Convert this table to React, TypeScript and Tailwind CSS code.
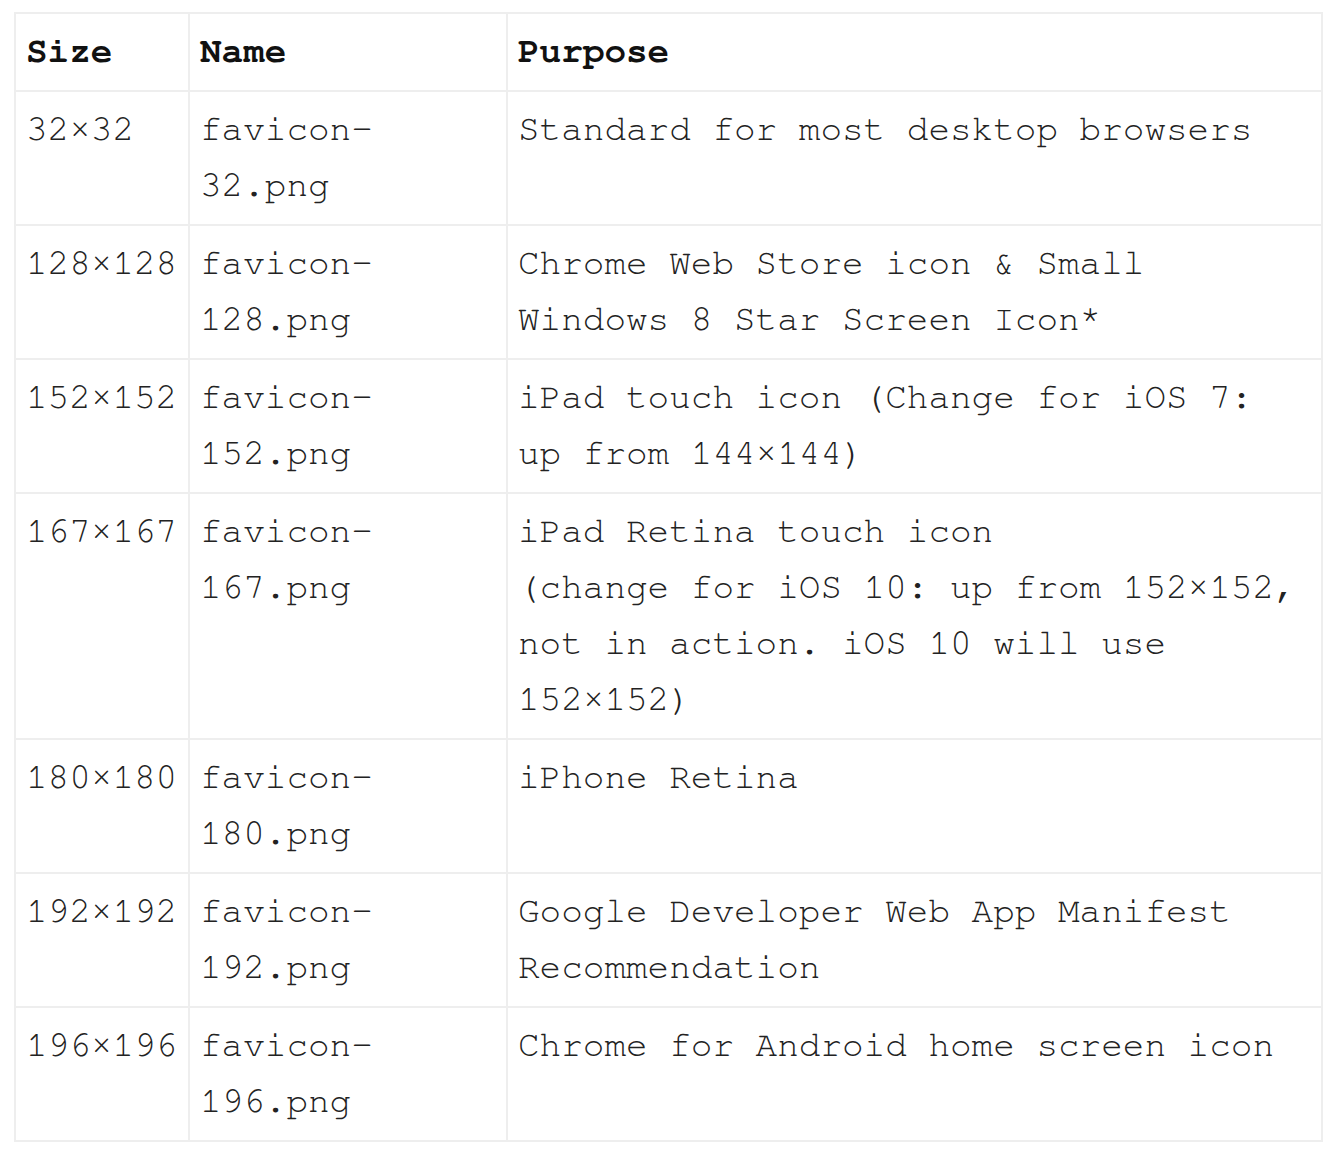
const rows: { size: string; name: string[]; purpose: string[] }[] = [
  { size: "32×32", name: ["favicon-", "32.png"], purpose: ["Standard for most desktop browsers"] },
  { size: "128×128", name: ["favicon-", "128.png"], purpose: ["Chrome Web Store icon & Small Windows 8 Star Screen Icon*"] },
  { size: "152×152", name: ["favicon-", "152.png"], purpose: ["iPad touch icon (Change for iOS 7: up from 144×144)"] },
  {
    size: "167×167",
    name: ["favicon-", "167.png"],
    purpose: ["iPad Retina touch icon", "(change for iOS 10: up from 152×152, not in action. iOS 10 will use 152×152)"],
  },
  { size: "180×180", name: ["favicon-", "180.png"], purpose: ["iPhone Retina"] },
  { size: "192×192", name: ["favicon-", "192.png"], purpose: ["Google Developer Web App Manifest Recommendation"] },
  { size: "196×196", name: ["favicon-", "196.png"], purpose: ["Chrome for Android home screen icon"] },
];

const cell = "border-2 border-[#eeeeee] px-[10px] pt-[9px] pb-[11px] align-top";

export default function App() {
  return (
    <div className="min-h-[1150px] bg-white pl-[14px] pt-[12px] font-['Nimbus_Mono_PS','Nimbus_Mono_L','FreeMono','Courier_10_Pitch','Liberation_Mono',monospace] text-[36px] leading-[56px] text-[#222222]">
      <table className="w-[1309px] table-fixed border-collapse">
        <colgroup>
          <col className="w-[174px]" />
          <col className="w-[318px]" />
          <col />
        </colgroup>
        <thead>
          <tr className="text-left font-bold text-[#111111]">
            <th className={cell}>Size</th>
            <th className={cell}>Name</th>
            <th className={cell}>Purpose</th>
          </tr>
        </thead>
        <tbody>
          {rows.map((row) => (
            <tr key={row.size}>
              <td className={cell + " whitespace-nowrap"}>{row.size}</td>
              <td className={cell}>
                {row.name.map((part) => (
                  <div key={part}>{part}</div>
                ))}
              </td>
              <td className={cell}>
                {row.purpose.map((line) => (
                  <div key={line}>{line}</div>
                ))}
              </td>
            </tr>
          ))}
        </tbody>
      </table>
    </div>
  );
}
